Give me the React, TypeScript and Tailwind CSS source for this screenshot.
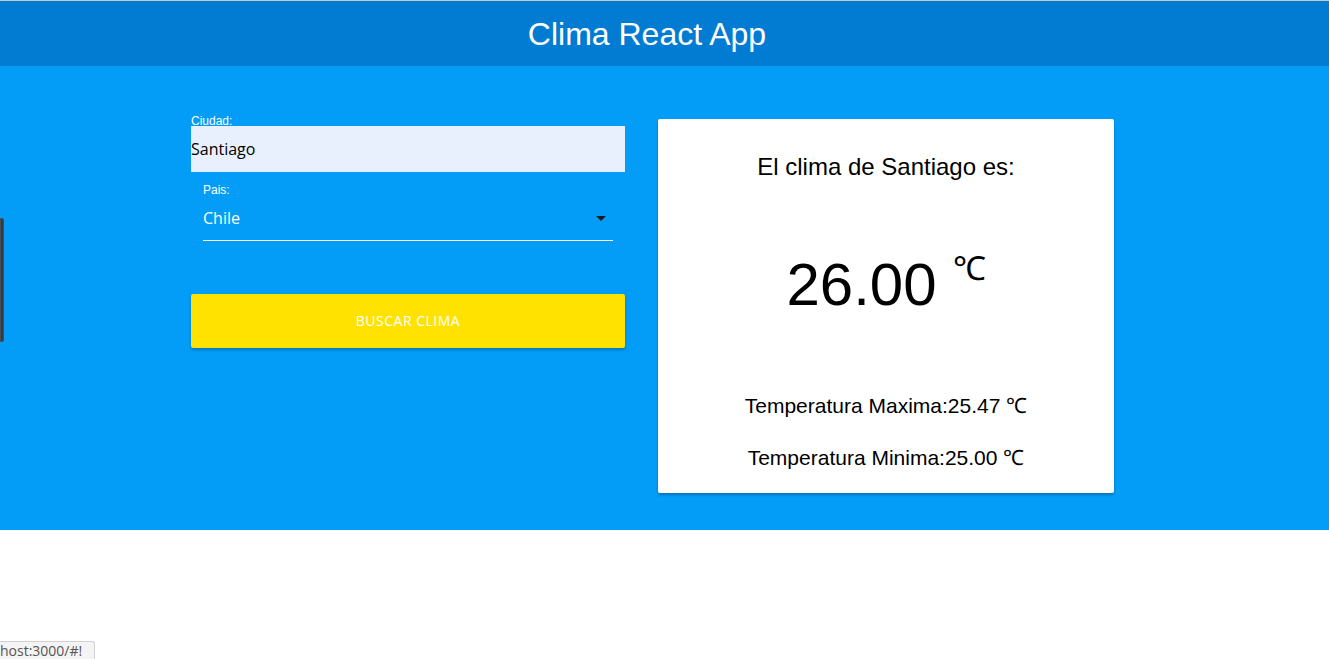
import React from 'react'

const arial = { fontFamily: '"Liberation Sans", Arial, sans-serif' }
const ubuntu = { fontFamily: '"Open Sans", "Noto Sans", sans-serif' }

function WeatherCard() {
    return (
        <div
            className="w-[456px] h-[374px] bg-white rounded-[2px] shadow-[0_2px_3px_rgba(0,0,0,0.25)] flex flex-col items-center text-black"
            style={arial}
        >
            <h2 className="mt-[33px] text-[24px] leading-[30px]">El clima de Santiago es:</h2>
            <div className="mt-[68px] flex items-start leading-[70px]">
                <span className="text-[60px]">26.00</span>
                <span className="ml-[16px] mt-[-16px] text-[33px]">&#8451;</span>
            </div>
            <p className="mt-[72px] text-[21px] leading-[28px]">Temperatura Maxima:25.47 &#8451;</p>
            <p className="mt-[24px] text-[21px] leading-[28px]">Temperatura Minima:25.00 &#8451;</p>
        </div>
    )
}

function SearchForm() {
    return (
        <form className="w-[434px] flex flex-col -mt-[3px]">
            <label className="text-[12px] leading-[10px] text-white" style={arial}>Ciudad:</label>
            <input
                defaultValue="Santiago"
                className="h-[46px] bg-[#e8f0fe] text-[16px] text-black outline-none"
                style={ubuntu}
            />
            <div className="mx-[12px] mt-[12px]">
                <label className="block text-[12px] leading-[13px] text-white" style={arial}>Pais:</label>
                <div className="h-[44px] flex items-center justify-between border-b border-white">
                    <span className="text-[16px] leading-[20px] -mt-[2px] text-white" style={ubuntu}>Chile</span>
                    <svg width="10" height="5" viewBox="0 0 10 5" className="mr-[7px]">
                        <path d="M0 0 L10 0 L5 5 Z" fill="#1a1a1a" />
                    </svg>
                </div>
            </div>
            <button
                type="button"
                className="mt-[53px] h-[54px] w-full bg-[#ffe200] rounded-[2px] text-white text-[14px] leading-[20px] pb-[1px] uppercase tracking-[0.5px] shadow-[0_2px_3px_rgba(0,0,0,0.25)]"
                style={ubuntu}
            >
                Buscar clima
            </button>
        </form>
    )
}

export default function App() {
    return (
        <div className="relative min-h-[659px] bg-white">
            <div className="h-[1px] bg-[#c9c9c9]" />
            <header className="h-[65px] bg-[#027bd2] flex items-center justify-center pr-[35px]">
                <h1 className="text-[32px] text-white" style={arial}>Clima React App</h1>
            </header>
            <main className="h-[464px] bg-[#039df7] pt-[53px]">
                <div className="ml-[191px] flex gap-[33px]">
                    <SearchForm />
                    <WeatherCard />
                </div>
            </main>

            {/* left edge tab */}
            <div className="absolute left-0 top-[218px] w-[4px] h-[124px] bg-[#2c3e50] border border-[#4a4a4a] rounded-r-[2px]" />

            {/* status bar */}
            <div
                className="absolute left-0 bottom-0 h-[18px] w-[95px] bg-[#f4f4f4] border-t border-r border-[#d0d0d0] rounded-tr-[3px] overflow-hidden flex items-center"
                style={ubuntu}
            >
                <span className="text-[14px] leading-[16px] text-[#555] whitespace-nowrap">host:3000/#!</span>
            </div>
        </div>
    )
}
